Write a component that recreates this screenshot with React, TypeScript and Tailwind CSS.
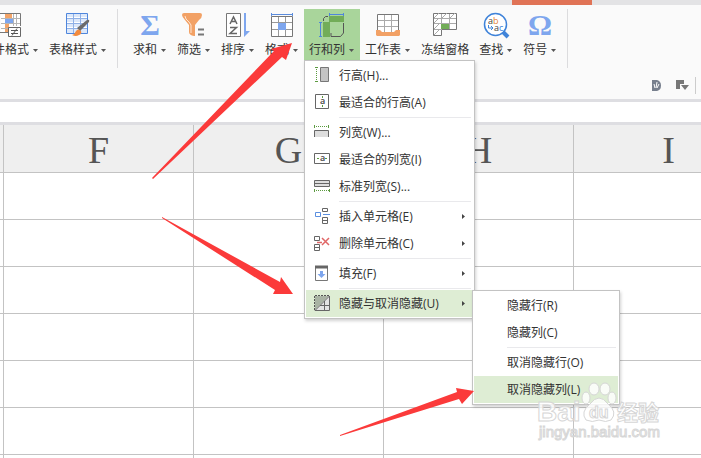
import type { ReactNode } from 'react';

const FONT = "font-['Open_Sans','Noto_Sans_CJK_SC',sans-serif]";

interface ToolProps {
  label: string;
  icon: ReactNode;
  arrow?: boolean;
  active?: boolean;
}

function ToolButton({ label, icon, arrow = true, active = false }: ToolProps) {
  return (
    <button
      type="button"
      aria-expanded={active || undefined}
      className={`flex h-[51px] shrink-0 flex-col items-center whitespace-nowrap pl-[5px] ${
        arrow ? 'pr-1.5' : 'pr-[5px]'
      } ${active ? 'bg-[#a9d59b]' : ''}`}
    >
      <svg
        width={arrow ? 25 : 26}
        height="26"
        className="mt-[3px] overflow-visible"
        fill="none"
        aria-hidden
      >
        {icon}
      </svg>
      <span className="mt-1 flex items-center gap-1">
        <span className="leading-4">{label}</span>
        {arrow && <Caret />}
      </span>
    </button>
  );
}

function Caret() {
  return (
    <svg width="5" height="3" viewBox="0 0 5 3" aria-hidden>
      <path d="M0 0h5L2.500 3z" fill="#555" />
    </svg>
  );
}

const ICONS = {
  condition: (
    <>
      <path d="M4 1h19v19H4z" fill="#fff" />
      <path d="M8 2h7v4H8zM8 12h4v8H8z" fill="#f3a468" />
      <path d="M8 7h8v4H8z" fill="#7ea6ee" />
      <path d="M4 6.500h19M4 11.500h19M4 16.500h8M16.500 2v12M19.500 2v12" stroke="#b5b5b5" />
      <path d="M3 1.500h20.500V14M3 20.500h8" stroke="#777" />
      <path d="M11.500 15.500h12v9h-12z" fill="#fff" stroke="#666" />
      <path d="M14 18.500h7M14 21.500h7M20 16.500l-5 7" stroke="#555" />
    </>
  ),
  tableStyle: (
    <>
      <path d="M1.500 1.500h21v20h-21z" fill="#dce8fa" stroke="#4f86dc" />
      <path d="M2 5.500h20M2 10.500h20M2 15.500h20" stroke="#fff" />
      <path d="M2 6.500h20M2 11.500h20M2 16.500h20M8.500 2v19M15.500 2v19" stroke="#8fb0e6" />
      <path d="M12 16l10-8q3-1 2 2l-9 9z" fill="#6b6b6b" />
      <path d="M7 23q3-1 4-4 2-3 5 0 1 3-2 4-3 2-7 0z" fill="#f28a3c" />
    </>
  ),
  sum: (
    <text
      x="13"
      y="23"
      textAnchor="middle"
      fontSize="30"
      fontWeight="700"
      fill="#7ea6ee"
      className="font-['Liberation_Serif',serif]"
    >
      Σ
    </text>
  ),
  filter: (
    <>
      <path d="M1 3q0-2 2-2h16q2 0 2 2 0 3-3 5l-4 5v11h-1q-5-1-5-4v-7L4 8Q1 5 1 3z" fill="#f2a165" />
      <path d="M4 4q0 3 4 6l2 3v8" stroke="#ffe5d2" />
      <path d="M17 17.500h6M17 22.500h6" stroke="#777" strokeWidth="2" />
    </>
  ),
  sort: (
    <>
      <path d="M1.500 1.500h14v23h-14z" fill="#fff" stroke="#777" />
      <path d="M5 12L8.500 5 12 12M6 9.500h5M5 15.500h6.500L5 21.500h7" stroke="#666" strokeWidth="1.500" />
      <path d="M19 1h2v18h4l-6 6z" fill="#7ea6ee" />
    </>
  ),
  format: (
    <>
      <path d="M2.500 4.500h21v20h-21z" fill="#fff" stroke="#777" />
      <path d="M9.500 5v19M16.500 5v19M3 10.500h20M3 17.500h20" stroke="#999" />
      <path d="M9 11h8v7H9z" fill="#7ea6ee" />
      <path d="M2 2.500h22M2.500 1v3M23.500 1v3" stroke="#5b8bdc" />
    </>
  ),
  rowsCols: (
    <>
      <path d="M10 4h15v6H10zM4 10h7v15H4z" fill="#72ad58" />
      <path d="M4.500 9V6.500l2-2H9" stroke="#555" />
      <path d="M24.500 11v10l-3 3.500H12V21" stroke="#555" />
      <path d="M10 2.500h15M10.500 1v3M24.500 1v3M1.500 10v15M0 10.500h3M0 24.500h3" stroke="#4f86dc" />
    </>
  ),
  worksheet: (
    <>
      <path d="M2.500 2.500h21v18h-21z" fill="#fff" stroke="#777" />
      <path d="M9.500 3v17M16.500 3v17M3 8.500h20M3 14.500h20" stroke="#aaa" />
      <path d="M1 18h4l2 2h12l2-2h4v5l-1 1H2l-1-1z" fill="#f2a165" />
    </>
  ),
  freeze: (
    <>
      <path d="M1.500 1.500h23v16h-15v6h-8z" fill="#fff" stroke="#777" />
      <path d="M2 6.500h22M2 11.500h22M2 17.500h8M9.500 2v15M17.500 2v15" stroke="#aaa" />
      <path d="M2 6l5-5M10 6l5-5M18 6l5-5M2 11l5-5M2 17l5-5M2 23l5-5" stroke="#aaa" />
      <path d="M9 12h8v5H9z" fill="#72ad58" />
    </>
  ),
  search: (
    <>
      <circle cx="12.500" cy="12.500" r="11" fill="#fff" stroke="#3f83d9" strokeWidth="1.500" />
      <path d="M20 20l5 5" stroke="#3f83d9" strokeWidth="4" />
      <text x="5" y="12" fontSize="9" fill="#444">
        a<tspan fill="#e58135">b</tspan>
      </text>
      <path d="M5.500 13v3h4M8 14l2 2-2 2" stroke="#3f83d9" />
      <text x="11" y="19" fontSize="9" fill="#444">
        a<tspan fill="#3f83d9">c</tspan>
      </text>
    </>
  ),
  symbol: (
    <text
      x="13"
      y="23"
      textAnchor="middle"
      fontSize="30"
      fontWeight="700"
      fill="#7ea6ee"
      className="font-['Liberation_Serif',serif]"
    >
      Ω
    </text>
  ),
};

interface MenuEntry {
  label: string;
  icon?: ReactNode;
  submenu?: boolean;
  active?: boolean;
}

const MENU: MenuEntry[][] = [
  [
    {
      label: '行高(H)...',
      icon: (
        <>
          <path d="M6.500.500h8v14h-8z" fill="#c4c4c4" stroke="#777" />
          <path d="M1 .500h3M1 14.500h3" stroke="#5c9a40" />
          <path d="M2.500 2v12" stroke="#5c9a40" strokeDasharray="1 1" />
        </>
      ),
    },
    {
      label: '最适合的行高(A)',
      icon: (
        <>
          <path d="M1.500.500h13v14h-13z" fill="#fff" stroke="#666" />
          <path d="M8.500 2v2M8.500 11v2" stroke="#5c9a40" />
          <text x="6" y="10" fontSize="9" fontWeight="600" fill="#444">a</text>
        </>
      ),
    },
  ],
  [
    {
      label: '列宽(W)...',
      icon: (
        <>
          <path d="M.500 13V6.500h14V13" fill="#ddd" stroke="#666" />
          <path d="M.500 1v3M14.500 1v3" stroke="#5c9a40" />
          <path d="M2 2.500h12" stroke="#5c9a40" strokeDasharray="1 1" />
        </>
      ),
    },
    {
      label: '最适合的列宽(I)',
      icon: (
        <>
          <path d="M.500 2.500h15v10H.500z" fill="#fff" stroke="#666" />
          <path d="M3 7.500h2M11 7.500h2" stroke="#5c9a40" />
          <text x="6" y="10" fontSize="9" fontWeight="600" fill="#444">a</text>
        </>
      ),
    },
    {
      label: '标准列宽(S)...',
      icon: (
        <>
          <path d="M.500 2.500h15v6H.500zM1 5.500h14" fill="#ddd" stroke="#666" />
          <path d="M.500 11v3M15.500 11v3" stroke="#5c9a40" />
          <path d="M2 12.500h13" stroke="#5c9a40" strokeDasharray="1 1" />
        </>
      ),
    },
  ],
  [
    {
      label: '插入单元格(E)',
      submenu: true,
      icon: (
        <>
          <path d="M1.500 4.500h5v4h-5zM9 6.500h7" stroke="#5b8fe0" />
          <path d="M8.500.500h5v3h-5zM8.500 9.500h5v6h-5zM8.500 12.500h5" stroke="#666" />
        </>
      ),
    },
    {
      label: '删除单元格(C)',
      submenu: true,
      icon: (
        <>
          <path d="M.500 1.500h5v4h-5zM.500 9.500h5v6h-5zM.500 12.500h5" stroke="#666" />
          <path d="M3 7.500h5M8 3l7 7M15 3l-7 7" stroke="#e06666" strokeWidth="1.500" />
        </>
      ),
    },
  ],
  [
    {
      label: '填充(F)',
      submenu: true,
      icon: (
        <>
          <path d="M1.500 1.500h12v14h-12z" fill="#fff" stroke="#777" />
          <path d="M1 2h13" stroke="#666" strokeWidth="3" />
          <path d="M6 6h3v3h2.500L7.500 13 3.500 9H6z" fill="#7ea6ee" />
        </>
      ),
    },
  ],
  [
    {
      label: '隐藏与取消隐藏(U)',
      submenu: true,
      active: true,
      icon: (
        <>
          <path d="M1 1h14L1 15z" fill="#a9b3a4" />
          <path d="M15 1v14H1z" fill="#e4e4e4" />
          <path d="M.500 15V.500H15" stroke="#555" strokeDasharray="2 1" />
          <path d="M15.500 1v14.500H1L15.500 1zM10.500 6v9M6 10.500h9" stroke="#666" />
        </>
      ),
    },
  ],
];

const SUBMENU: MenuEntry[][] = [
  [{ label: '隐藏行(R)' }, { label: '隐藏列(C)' }],
  [{ label: '取消隐藏行(O)' }, { label: '取消隐藏列(L)', active: true }],
];

function Menu({ groups, label }: { groups: MenuEntry[][]; label: string }) {
  return (
    <div
      role="menu"
      aria-label={label}
      className="border border-[#c3c3c3] bg-white p-px shadow-[1px_2px_3px_rgba(0,0,0,0.18)]"
    >
      {groups.map((group, index) => (
        <div key={group[0].label} role="group">
          {index > 0 && <div className="my-px ml-[33px] mr-0.5 h-px bg-[#e9e9ec]" />}
          {group.map((entry) => (
            <button
              key={entry.label}
              type="button"
              role="menuitem"
              className={`flex h-[27px] w-full items-center whitespace-nowrap pl-2 pr-1.5 text-left ${
                entry.active ? 'bg-[#deedd4]' : ''
              }`}
            >
              <svg width="17" height="17" viewBox="0 0 17 17" className="mr-2 shrink-0" fill="none" aria-hidden>
                {entry.icon}
              </svg>
              <span className="flex-1">{entry.label}</span>
              {entry.submenu && (
                <svg width="3" height="5" viewBox="0 0 3 5" className="mr-0.5" aria-hidden>
                  <path d="M0 0v5l3-2.500z" fill="#444" />
                </svg>
              )}
            </button>
          ))}
        </div>
      ))}
    </div>
  );
}

function Ribbon() {
  return (
    <header className="bg-[#fafafa]">
      <div className="flex h-[5px] bg-[#e3e3e5]">
        <div className="ml-[512px] w-20 bg-[#e07356]" />
      </div>
      <div className="flex h-[63px] pt-1">
        <div className="-ml-6 flex">
          <ToolButton label="条件格式" icon={ICONS.condition} />
          <ToolButton label="表格样式" icon={ICONS.tableStyle} />
        </div>
        <div className="ml-[5px] mr-2.5 w-px shrink-0 bg-[#dcdcde]" />
        <div className="flex">
          <ToolButton label="求和" icon={ICONS.sum} />
          <ToolButton label="筛选" icon={ICONS.filter} />
          <ToolButton label="排序" icon={ICONS.sort} />
          <ToolButton label="格式" icon={ICONS.format} />
          <ToolButton label="行和列" icon={ICONS.rowsCols} active />
          <ToolButton label="工作表" icon={ICONS.worksheet} />
          <ToolButton label="冻结窗格" icon={ICONS.freeze} arrow={false} />
          <ToolButton label="查找" icon={ICONS.search} />
          <ToolButton label="符号" icon={ICONS.symbol} />
        </div>
        <div className="ml-[5px] w-px shrink-0 bg-[#dcdcde]" />
      </div>
      <div className="flex h-[31px] items-center justify-end pr-[5px] pt-1">
        <svg width="10" height="11" viewBox="0 0 10 11" className="mr-3.5" aria-hidden>
          <path d="M0 0h5q4 1 4 5.500T5 11H0z" fill="#777f8d" />
          <path d="M2 4l1 4M5 2L4 8M7 4L5 8" stroke="#fff" />
        </svg>
        <svg width="13" height="11" viewBox="0 0 13 11" className="mr-1.5" aria-hidden>
          <path d="M0 0h8v4H4v5H0zM5 5h8L9 10z" fill="#777" />
        </svg>
        <div className="h-[17px] w-px bg-[#ccc]" />
      </div>
    </header>
  );
}

const COLUMNS = ['F', 'G', 'H', 'I'];
const ROWS = [1, 2, 3, 4, 5, 6, 7];

function Sheet() {
  return (
    <div className="overflow-hidden">
      <table className="w-[764px] table-fixed border-separate border-spacing-0">
        <colgroup>
          <col className="w-1" />
          <col span={4} className="w-[190px]" />
        </colgroup>
        <thead>
          <tr>
            <td className="h-12 border-b border-r border-[#c3c3c3] bg-[#efefef]" />
            {COLUMNS.map((name) => (
              <th
                key={name}
                scope="col"
                className="h-12 border-b border-r border-[#c3c3c3] bg-[#efefef] p-0 pt-1 font-['Liberation_Serif','Noto_Sans_CJK_SC',serif] text-[38px] font-normal leading-[43px] text-[#555]"
              >
                {name}
              </th>
            ))}
          </tr>
        </thead>
        <tbody>
          {ROWS.map((row) => (
            <tr key={row}>
              <td className="h-[47px] border-b border-r border-[#c3c3c3] p-0" />
              {COLUMNS.map((name) => (
                <td key={name} className="h-[47px] border-b border-r border-[#c3c3c3] p-0" />
              ))}
            </tr>
          ))}
        </tbody>
      </table>
    </div>
  );
}

function Watermark() {
  return (
    <svg
      width="130"
      height="68"
      viewBox="0 0 130 68"
      className="font-['Liberation_Sans','Noto_Sans_CJK_SC',sans-serif]"
      aria-hidden
    >
      <g fill="#fff" stroke="#d6d6d6" fillOpacity="0.8">
        <text x="1" y="41" fontSize="28" fontWeight="700">Bai</text>
        <ellipse cx="50" cy="18" rx="4" ry="6" />
        <ellipse cx="58" cy="9" rx="5" ry="6" />
        <ellipse cx="69" cy="9" rx="5" ry="6" />
        <ellipse cx="76" cy="18" rx="4" ry="6" />
        <path d="M54 24q9-12 18 0 10 8 3 16-5 3-12 0-7 3-13 0-6-8 4-16z" />
        <text x="53" y="38" fontSize="16" fontWeight="700">du</text>
        <text x="81" y="40" fontSize="21" fontWeight="700">经验</text>
        <text x="3" y="57" fontSize="15">jingyan.baidu.com</text>
      </g>
    </svg>
  );
}

export default function App() {
  return (
    <div className={`relative h-screen overflow-hidden bg-white text-xs text-[#333] ${FONT}`}>
      <Ribbon />
      <div className="h-[26px] border-y-[3px] border-[#dedee2] bg-white" />
      <Sheet />
      <div className="absolute left-[304px] top-[60px] w-[171px]">
        <Menu label="行和列" groups={MENU} />
      </div>
      <div className="absolute left-[472px] top-[290px] w-[148px]">
        <Menu label="隐藏与取消隐藏" groups={SUBMENU} />
      </div>
      <div className="pointer-events-none absolute left-[536px] top-[380px]">
        <Watermark />
      </div>
      <svg width="701" height="458" viewBox="0 0 701 458" className="pointer-events-none absolute left-0 top-0" aria-hidden>
        <g fill="#fb3a3a">
          <path d="M152 178L274 51L271 49L292 43L286 60L282 57L153 179z" />
          <path d="M162 217L280 282L281 277L293 294L273 294L275 290L162 218z" />
          <path d="M340 435L457 392L456 388L474 391L462 404L459 399L340 436z" />
        </g>
      </svg>
    </div>
  );
}
